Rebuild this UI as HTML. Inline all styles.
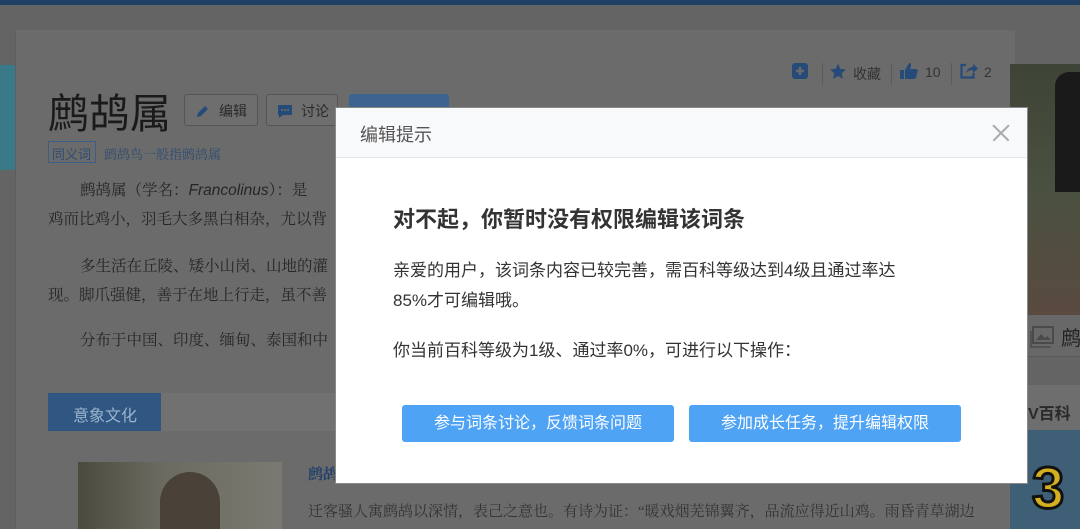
<!DOCTYPE html><html><head><meta charset="utf-8"><style>
*{margin:0;padding:0;box-sizing:border-box}
body{width:1080px;height:529px;overflow:hidden;background:#646464;font-family:"Liberation Sans","Noto Sans CJK SC",sans-serif;position:relative}
.a{position:absolute}
.serif{font-family:"Liberation Serif","Noto Serif CJK SC","AR PL UMing CN",serif}
</style></head><body>
<div class="a" style="left:0;top:0;width:1080px;height:5px;background:#1f3f63"></div>
<div class="a" style="left:15px;top:30px;width:1000px;height:499px;background:#6b6b6b;border-left:1px solid #5e5e5e"></div>
<div class="a" style="left:0;top:65px;width:15px;height:105px;background:#3a7a88"></div>
<div class="a" style="left:48px;top:80px;font-size:41px;color:#1a1a1a">鹧鸪属</div>
<div class="a" style="left:184px;top:94px;width:74px;height:32px;border:1px solid #555;border-radius:3px;background:#6e6e6e;font-size:14px;color:#2a2a2a;padding:6px 0 0 34px">编辑<svg class="a" style="left:11px;top:9px" width="14" height="14" viewBox="0 0 14 14"><path d="M1 13l1-4 7-7 3 3-7 7z" fill="#274b78"/></svg></div>
<div class="a" style="left:266px;top:94px;width:72px;height:32px;border:1px solid #555;border-radius:3px;background:#6e6e6e;font-size:14px;color:#2a2a2a;padding:6px 0 0 34px">讨论<svg class="a" style="left:10px;top:9px" width="16" height="15" viewBox="0 0 16 15"><path d="M1 1h14v10H6l-4 3v-3H1z" fill="#274b78"/><circle cx="5" cy="6" r="1" fill="#6e6e6e"/><circle cx="8" cy="6" r="1" fill="#6e6e6e"/><circle cx="11" cy="6" r="1" fill="#6e6e6e"/></svg></div>
<div class="a" style="left:349px;top:94px;width:100px;height:14px;background:#3d6390;border-radius:3px 3px 0 0"></div>
<div class="a" style="left:48px;top:141px;width:48px;height:22px;border:1px solid #3a5f88;font-size:13px;color:#2f4d70;padding:2px 3px">同义词</div>
<div class="a serif" style="left:104px;top:144px;font-size:13px;color:#2f4d70">鹧鸪鸟一般指鹧鸪属</div>
<div class="a serif" style="left:48px;top:176px;font-size:15.5px;color:#262626;line-height:29px;white-space:nowrap">
<div style="padding-left:32px">鹧鸪属（学名：<i style="font-family:'Liberation Sans'">Francolinus</i>）：是</div>
<div>鸡而比鸡小，羽毛大多黑白相杂，尤以背</div>
<div style="padding-left:32px;margin-top:18px">多生活在丘陵、矮小山岗、山地的灌</div>
<div>现。脚爪强健，善于在地上行走，虽不善</div>
<div style="padding-left:32px;margin-top:16px">分布于中国、印度、缅甸、泰国和中</div>
</div>
<div class="a" style="left:48px;top:393px;width:960px;height:38px;background:#717171"></div>
<div class="a" style="left:48px;top:393px;width:113px;height:38px;background:#2f5782;color:#9ab3cf;font-size:16px;padding:9px 0 0 25px">意象文化</div>
<div class="a" style="left:78px;top:462px;width:204px;height:67px;background:linear-gradient(90deg,#4a4a3e,#6a6a60 40%,#7a7a72)"></div>
<div class="a" style="left:160px;top:472px;width:60px;height:57px;background:#4a4238;border-radius:30px 30px 0 0"></div>
<div class="a serif" style="left:308px;top:463px;font-size:15px;color:#1f3f6a;font-weight:bold">鹧鸪</div>
<div class="a serif" style="left:308px;top:500px;font-size:15px;color:#333;white-space:nowrap">迁客骚人寓鹧鸪以深情，表己之意也。有诗为证：“暖戏烟芜锦翼齐，品流应得近山鸡。雨昏青草湖边</div>
<svg class="a" style="left:792px;top:63px" width="16" height="16" viewBox="0 0 16 16"><rect width="16" height="16" rx="3" fill="#274b78"/><path d="M8 4v8M4 8h8" stroke="#6b6b6b" stroke-width="2.4"/></svg>
<div class="a" style="left:822px;top:63px;width:1px;height:22px;background:#5a5a5a"></div>
<svg class="a" style="left:829px;top:63px" width="18" height="17" viewBox="0 0 24 23"><path d="M12 1l3.2 7 7.6.8-5.7 5.1 1.6 7.5L12 17.6 5.3 21.4l1.6-7.5L1.2 8.8 8.8 8z" fill="#274b78"/></svg>
<div class="a" style="left:853px;top:64px;font-size:14px;color:#333">收藏</div>
<div class="a" style="left:891px;top:63px;width:1px;height:22px;background:#5a5a5a"></div>
<svg class="a" style="left:900px;top:62px" width="18" height="18" viewBox="0 0 18 18"><rect x="0" y="8" width="4" height="9" fill="#274b78"/><path d="M5 8l4-7c2 0 2.5 1.5 2 3l-1 3h6c1.5 0 2 1 1.7 2.2l-1.7 6.3c-.3 1-1 1.5-2 1.5H5z" fill="#274b78"/></svg>
<div class="a" style="left:925px;top:64px;font-size:14px;color:#333">10</div>
<div class="a" style="left:951px;top:63px;width:1px;height:22px;background:#5a5a5a"></div>
<svg class="a" style="left:960px;top:63px" width="18" height="16" viewBox="0 0 18 16"><path d="M6 2H1.5v12.5h12V10" fill="none" stroke="#274b78" stroke-width="2.2"/><path d="M6 10c1-4 4-6 7-6V1l5 4.5-5 4.5V7c-3 0-5 1-7 3z" fill="#274b78"/></svg>
<div class="a" style="left:984px;top:64px;font-size:14px;color:#333">2</div>
<div class="a" style="left:1010px;top:64px;width:70px;height:251px;background:linear-gradient(180deg,#3e4436,#4a5140 50%,#5a4a40)"></div>
<div class="a" style="left:1055px;top:72px;width:25px;height:120px;background:#1a1a1a;border-radius:14px 0 0 0"></div>
<div class="a" style="left:1010px;top:315px;width:70px;height:42px;background:#686868;border-bottom:1px solid #5a5a5a"></div>
<svg class="a" style="left:1030px;top:326px" width="24" height="22" viewBox="0 0 24 22"><rect x="3" y="1" width="20" height="16" fill="none" stroke="#4a4a4a" stroke-width="2"/><path d="M1 5v16h20" fill="none" stroke="#4a4a4a" stroke-width="1.5"/><path d="M6 14l5-6 4 4 2-2 4 4z" fill="#4a4a4a"/></svg>
<div class="a" style="left:1061px;top:322px;font-size:20px;color:#222">鹧</div>
<div class="a" style="left:1010px;top:385px;width:70px;height:45px;background:#6e6e6e"></div>
<div class="a" style="left:1028px;top:400px;font-size:16px;font-weight:bold;color:#2a2a2a">V百科</div>
<div class="a" style="left:1010px;top:430px;width:70px;height:99px;background:#3e5f75"></div>
<div class="a" style="left:1032px;top:455px;font-size:58px;font-weight:bold;color:#d4b020;-webkit-text-stroke:3px #111">3</div>

<div class="a" style="left:335px;top:107px;width:693px;height:377px;background:#fff;border:1px solid #888"></div>
<div class="a" style="left:336px;top:108px;width:691px;height:50px;background:#f8f9fb;border-bottom:1px solid #e8e8e8"></div>
<div class="a" style="left:360px;top:121px;font-size:18px;color:#555">编辑提示</div>
<div class="a" style="left:990px;top:132px;width:22px;height:1.5px;background:#aaa;transform:rotate(45deg)"></div>
<div class="a" style="left:990px;top:132px;width:22px;height:1.5px;background:#aaa;transform:rotate(-45deg)"></div>
<div class="a" style="left:393px;top:202px;font-size:22px;font-weight:bold;color:#333">对不起，你暂时没有权限编辑该词条</div>
<div class="a" style="left:393px;top:256px;font-size:17px;color:#333;line-height:30px;width:590px">亲爱的用户，该词条内容已较完善，需百科等级达到4级且通过率达<br>85%才可编辑哦。</div>
<div class="a" style="left:393px;top:336px;font-size:17px;color:#333;line-height:30px">你当前百科等级为1级、通过率0%，可进行以下操作：</div>
<div class="a" style="left:402px;top:405px;width:272px;height:37px;background:#4fa3f5;border-radius:3px;color:#fff;font-size:16px;text-align:center;line-height:37px">参与词条讨论，反馈词条问题</div>
<div class="a" style="left:689px;top:405px;width:272px;height:37px;background:#4fa3f5;border-radius:3px;color:#fff;font-size:16px;text-align:center;line-height:37px">参加成长任务，提升编辑权限</div>
</body></html>
